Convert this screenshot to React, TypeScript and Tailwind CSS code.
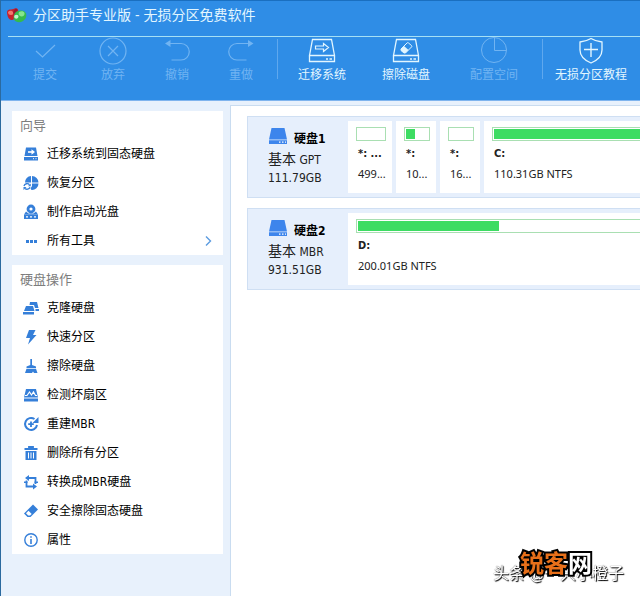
import React from "react";

type IconProps = { className?: string };

const Svg = ({
  children,
  size = 16,
}: {
  children: React.ReactNode;
  size?: number;
}) => (
  <svg
    width={size}
    height={size}
    viewBox={`0 0 ${size} ${size}`}
    fill="none"
    stroke="currentColor"
    aria-hidden="true"
    className="shrink-0"
  >
    {children}
  </svg>
);

// Toolbar icons (28 x 28)
const CheckIcon = () => (
  <Svg size={28}>
    <path d="M5 14l6.500 6L24 8" strokeWidth="1.200" />
  </Svg>
);

const DiscardIcon = () => (
  <Svg size={28}>
    <circle cx="14" cy="14" r="13" strokeWidth="1.200" />
    <path d="M9 9l10 10M19 9L9 19" strokeWidth="1.200" />
  </Svg>
);

const UndoIcon = () => (
  <Svg size={28}>
    <path d="M5 6.500h13a8 8 0 0 1 0 16.500H8.500" strokeWidth="1.200" />
    <path d="M7.500 3v7L2 6.500z" fill="currentColor" stroke="none" />
  </Svg>
);

const RedoIcon = () => (
  <Svg size={28}>
    <path d="M23 6.500H10a8 8 0 0 0 0 16.500h9.500" strokeWidth="1.200" />
    <path d="M21 3v7l5.500-3.500z" fill="currentColor" stroke="none" />
  </Svg>
);

const MigrateIcon = () => (
  <Svg size={28}>
    <path d="M4.500 2.500h19l3 16h-25zM1.500 18.500h25v6h-25z" strokeWidth="1.300" />
    <path d="M7.500 9h8V6.500l5 4-5 4V12h-8z" strokeWidth="1.200" />
    <path d="M18 22h2M21.500 22h2.500" strokeWidth="1.500" />
  </Svg>
);

const WipeIcon = () => (
  <Svg size={28}>
    <path d="M4.500 2.500h19l3 16h-25zM1.500 18.500h25v6h-25z" strokeWidth="1.300" />
    <path d="M9 12l6-6a1 1 0 0 1 1.500 0l3 2.500a1 1 0 0 1 0 1.500l-6 6H12l-3-2.500z" />
    <path d="M9 12l3-3 4.500 4-3 3H12l-3-2.500z" fill="currentColor" stroke="none" />
    <path d="M18 22h2M21.500 22h2.500" strokeWidth="1.500" />
  </Svg>
);

const SpaceIcon = () => (
  <Svg size={28}>
    <circle cx="14" cy="13" r="12.500" />
    <path d="M14.500 1v12.500H26" />
  </Svg>
);

const ShieldIcon = () => (
  <Svg size={28}>
    <path
      d="M14 1.500c4 2.500 7 3 11 3.500v8c0 6-5 10.500-11 13-6-2.500-11-7-11-13V5c4-.5 7-1 11-3.500z"
      strokeWidth="1.300"
    />
    <path d="M14 6v14M7 12.500h14" strokeWidth="1.400" />
  </Svg>
);

// Sidebar icons (16 x 16)
const MigrateSmall = () => (
  <Svg>
    <path d="M3 1.500h10l1.500 8.500h-13zM1 11h14v3.500H1z" fill="currentColor" stroke="none" />
    <path d="M5 6h4" stroke="#fff" strokeWidth="1.600" />
    <path d="M8.500 3.200L12 6 8.500 8.800z" fill="#fff" stroke="none" />
    <path d="M10 12.700h1M12.500 12.700h1" stroke="#fff" />
  </Svg>
);

const RecoverSmall = () => (
  <Svg>
    <path
      d="M8 1v6.500H2A6.500 6.500 0 0 1 8 1zM9 1a6.500 6.500 0 0 1 6.500 6.500H9zM9 8.500h6.500A6.500 6.500 0 0 1 8.500 15L7.500 13.500 9 11z"
      fill="currentColor"
      stroke="none"
    />
    <path d="M1 11a3.200 3.200 0 0 1 5.500-1.300M7 12.300A3.200 3.200 0 0 1 2 13.500" strokeWidth="1.400" />
    <path d="M7.800 8.500v2.800H5zM.5 15v-3h3z" fill="currentColor" stroke="none" />
  </Svg>
);

const BootDiscSmall = () => (
  <Svg>
    <circle cx="8" cy="5" r="3" strokeWidth="2.800" />
    <path d="M1 10.500L3 7.500l2.500 2h5l2.500-2 2 3z" fill="currentColor" stroke="none" />
    <path d="M1 10.500h14V15H1z" fill="currentColor" stroke="none" />
    <path d="M3 12.800h2M7 12.800h2M11 12.800h2" stroke="#fff" strokeWidth="1.300" />
  </Svg>
);

const DotsSmall = () => (
  <Svg>
    <path d="M3 7h3v3H3zM7 7h3v3H7zM11 7h3v3h-3z" fill="currentColor" stroke="none" />
  </Svg>
);

const CloneSmall = () => (
  <Svg>
    <path
      d="M7 2h7l1.500 6H12l-1-3H6.500zM3 6h7l1.500 5H1zM0 12h11v2.500H0zM12.500 9H16v2h-3.500z"
      fill="currentColor"
      stroke="none"
    />
  </Svg>
);

const BoltSmall = () => (
  <Svg>
    <path d="M6 1h6.500L10 6h3.500L5 15.500 7 9H3z" fill="currentColor" stroke="none" />
  </Svg>
);

const BrushSmall = () => (
  <Svg>
    <path
      d="M7.300 1H9v6l4 1.500V10H3.500V8.500L7.300 7zM3.500 10.800H13l1.500 4.200H11l-1-1.500L9 15H2z"
      fill="currentColor"
      stroke="none"
    />
  </Svg>
);

const CheckSectorSmall = () => (
  <Svg>
    <path d="M3 2h10l2 8.500H1zM1 11.500h14v3H1z" fill="currentColor" stroke="none" />
    <path d="M2 8.500h2L6.500 5l2 3 2-3L12.500 8.500H14" stroke="#fff" strokeWidth="1.200" />
  </Svg>
);

const RebuildSmall = () => (
  <Svg>
    <path d="M11.500 3A6 6 0 1 0 14 9" strokeWidth="2" />
    <path d="M15.500 1v6H9.500z" fill="currentColor" stroke="none" />
    <path d="M8 5.500V11M5.200 8.200h5.600" strokeWidth="1.800" />
  </Svg>
);

const TrashSmall = () => (
  <Svg>
    <path d="M1.500 4h13M6 3.500V2h4v1.500" strokeWidth="1.800" />
    <path d="M2.500 6h11v9h-11z" fill="currentColor" stroke="none" />
    <path d="M5.500 7.500v6M8 7.500v6M10.500 7.500v6" stroke="#fff" />
  </Svg>
);

const ConvertSmall = () => (
  <Svg>
    <path d="M3.500 6.500v6H11M5 4h7.500v6" strokeWidth="1.800" />
    <path
      d="M6 1v6L2 4zM10 9.500v6l4-3zM1 7.500h3.500v1.600H1zM11.500 7.500H15v1.600h-3.500z"
      fill="currentColor"
      stroke="none"
    />
  </Svg>
);

const EraserSmall = () => (
  <Svg>
    <path d="M10 1.500L15 6.500l-7.500 7.500H4.500L1 10.500z" fill="currentColor" stroke="none" />
    <path d="M5.500 7.800L8.700 11l-1.700 1.600H5.200L3 10.300z" fill="#fff" stroke="none" />
  </Svg>
);

const InfoSmall = () => (
  <Svg>
    <circle cx="8" cy="8" r="6.200" strokeWidth="1.400" />
    <path d="M8 7v5M8 4.200v1.600" strokeWidth="1.600" />
  </Svg>
);

const LogoIcon = ({ className }: IconProps) => (
  <svg width="20" height="16" viewBox="0 0 20 16" aria-hidden="true" className={className}>
    <path d="M0 5c0-2 2-2.500 4-2.500S8 .5 10 1.500s1 4 0 6-2 5-5 5.500S0 9 0 5z" fill="#c9202c" />
    <path d="M1 5c2-2 4-1 5 0s0 3-2 3-3-1-3-3z" fill="#f2776d" />
    <path d="M8 2c2-1 3 1 2 3L7 8 6 5z" fill="#9c1730" />
    <path d="M7 8c1-3 3-4 6-4.500s5 .5 6 3-.5 6-3 7.500-5 1.500-7 .5-3-3-2-6.500z" fill="#35bb4c" />
    <path d="M12 5c2-1.500 5-1 5.500 1S16 10 14 9.500 11 7 12 5z" fill="#86e58c" />
    <path d="M7.500 8.500c2-1.500 4-.5 4 1s-1.500 2.500-3 2-1.500-2-1-3z" fill="#c4f2d0" />
  </svg>
);

const DiskIcon = () => (
  <svg width="20" height="18" viewBox="0 0 20 18" aria-hidden="true">
    <path d="M3.500 1h13L19 12.500H1zM1 13.300h18V17H1z" fill="#3d85ec" />
    <path d="M11 15.200h1.500M14 15.200h1.500M17 15.200h1" stroke="#fff" strokeWidth="1.200" />
  </svg>
);

const wizardItems = [
  { label: "迁移系统到固态硬盘", icon: <MigrateSmall /> },
  { label: "恢复分区", icon: <RecoverSmall /> },
  { label: "制作启动光盘", icon: <BootDiscSmall /> },
  { label: "所有工具", icon: <DotsSmall />, more: true },
];

const diskItems = [
  { label: "克隆硬盘", icon: <CloneSmall /> },
  { label: "快速分区", icon: <BoltSmall /> },
  { label: "擦除硬盘", icon: <BrushSmall /> },
  { label: "检测坏扇区", icon: <CheckSectorSmall /> },
  { label: "重建MBR", icon: <RebuildSmall /> },
  { label: "删除所有分区", icon: <TrashSmall /> },
  { label: "转换成MBR硬盘", icon: <ConvertSmall /> },
  { label: "安全擦除固态硬盘", icon: <EraserSmall /> },
  { label: "属性", icon: <InfoSmall /> },
];

const disks = [
  {
    name: "硬盘1",
    style: "GPT",
    size: "111.79GB",
    partitions: [
      { name: "*: ...", size: "499...", used: 0, width: "w-11" },
      { name: "*:", size: "10...", used: 42, width: "w-10" },
      { name: "*:", size: "16...", used: 0, width: "w-10" },
      { name: "C:", size: "110.31GB NTFS", used: 100, width: "" },
    ],
  },
  {
    name: "硬盘2",
    style: "MBR",
    size: "931.51GB",
    partitions: [{ name: "D:", size: "200.01GB NTFS", used: 50, width: "" }],
  },
];

const ToolButton = ({
  label,
  icon,
  disabled,
  className,
}: {
  label: string;
  icon: React.ReactNode;
  disabled?: boolean;
  className: string;
}) => (
  <button
    disabled={disabled}
    className={`flex shrink-0 flex-col items-center gap-0.5 text-xs leading-4 whitespace-nowrap ${
      disabled ? "text-[#71b4f2]" : "text-[#e2f6ff]"
    } ${className}`}
  >
    {icon}
    {label}
  </button>
);

const Divider = ({ className }: { className: string }) => (
  <div className={`mt-0.5 h-10 w-px shrink-0 bg-[#5fa8ee] ${className}`} />
);

const Panel = ({
  title,
  items,
}: {
  title: string;
  items: { label: string; icon: React.ReactNode; more?: boolean }[];
}) => (
  <section className="bg-white">
    <h2 className="flex h-7 items-center pt-0.5 pl-2 text-[13px] text-[#7d7d7d]">
      {title}
    </h2>
    <ul>
      {items.map((item) => (
        <li key={item.label}>
          <button className="flex h-[29px] w-full items-center gap-2 px-[11px] text-xs text-black">
            <span className="text-[#357fd9]">{item.icon}</span>
            {item.label}
            {item.more && (
              <svg
                width="8"
                height="12"
                viewBox="0 0 8 12"
                fill="none"
                stroke="#5b9be0"
                strokeWidth="1.400"
                className="ml-auto"
                aria-hidden="true"
              >
                <path d="M2 1.500L6.500 6 2 10.500" />
              </svg>
            )}
          </button>
        </li>
      ))}
    </ul>
  </section>
);

const App = () => {
  return (
    <div className="flex min-h-screen flex-col overflow-hidden border-l border-[#2b6a9f] bg-white font-['DejaVu_Sans_Condensed','Noto_Sans_CJK_SC',sans-serif]">
      <header className="border-t border-b border-t-[#1a6fc0] border-b-[#7fb4ee] bg-[#2f8de6]">
        <div className="flex h-[35px] items-center gap-1.5 pb-2 pl-1.5">
          <LogoIcon />
          <h1 className="text-sm text-[#e2f6ff]">
            分区助手专业版 - 无损分区免费软件
          </h1>
        </div>
        <div className="ml-[7px] h-px bg-[#a6e0f5]" />
        <nav className="flex h-[63px] items-start pl-3">
          <ToolButton label="提交" icon={<CheckIcon />} disabled className="w-16" />
          <ToolButton label="放弃" icon={<DiscardIcon />} disabled className="ml-1 w-16" />
          <ToolButton label="撤销" icon={<UndoIcon />} disabled className="w-16" />
          <ToolButton label="重做" icon={<RedoIcon />} disabled className="w-16" />
          <Divider className="ml-1" />
          <ToolButton label="迁移系统" icon={<MigrateIcon />} className="ml-1 w-20" />
          <ToolButton label="擦除磁盘" icon={<WipeIcon />} className="ml-1 w-20" />
          <ToolButton label="配置空间" icon={<SpaceIcon />} disabled className="ml-2 w-20" />
          <Divider className="ml-2" />
          <ToolButton label="无损分区教程" icon={<ShieldIcon />} className="w-24" />
        </nav>
      </header>

      <div className="flex flex-1 bg-[#e8f1fc] pt-1">
        <aside className="flex w-[229px] shrink-0 flex-col gap-2.5 pt-1.5 pr-[7px] pl-[11px]">
          <Panel title="向导" items={wizardItems} />
          <Panel title="硬盘操作" items={diskItems} />
        </aside>

        <main className="flex min-w-0 flex-1 flex-col gap-2.5 border-t border-l border-[#c9dcf0] bg-white pt-2.5 pl-4">
          {disks.map((disk) => (
            <article
              key={disk.name}
              className="flex border border-r-0 border-[#cfdff3] bg-[#e6effc] py-1"
            >
              <div className="w-[100px] shrink-0 pt-1.5 pl-5 text-[#222]">
                <div className="flex items-end gap-1.5">
                  <DiskIcon />
                  <h3 className="text-xs leading-3 font-bold text-black">
                    {disk.name}
                  </h3>
                </div>
                <p className="mt-1 text-xs leading-5">
                  <span className="text-sm leading-5">基本</span> {disk.style}
                </p>
                <p className="text-xs leading-4">{disk.size}</p>
              </div>
              <div className="flex min-w-0 flex-1 gap-1">
                {disk.partitions.map((part, i) => (
                  <div
                    key={i}
                    className={`h-[72px] bg-white pt-1.5 pl-2 text-[11px] text-[#222] ${
                      part.width ? `${part.width} shrink-0 pr-1.5` : "min-w-0 flex-1"
                    }`}
                  >
                    <div
                      className={`h-3.5 border border-[#a9dfb2] p-px ${
                        part.width ? "" : "border-r-0 pr-0"
                      }`}
                    >
                      <div
                        className="h-full bg-[#3ddc62]"
                        style={{ width: `${part.used}%` }}
                      />
                    </div>
                    <p className="mt-[5px] pl-0.5 leading-4 font-bold whitespace-nowrap">
                      {part.name}
                    </p>
                    <p className="mt-1 pl-0.5 font-['Noto_Sans',sans-serif] leading-4 whitespace-nowrap">
                      {part.size}
                    </p>
                  </div>
                ))}
              </div>
            </article>
          ))}
        </main>
      </div>

      {/* Watermarks over the lower right corner */}
      <div className="pointer-events-none fixed right-4 bottom-2.5 text-base leading-6 whitespace-nowrap text-white [text-shadow:1px_1px_1px_#000,0_0_1px_#333]">
        头条 @一只小橙子
      </div>
      <div className="pointer-events-none fixed right-12 bottom-4 text-2xl leading-8 font-bold text-[#e8701a] [-webkit-text-stroke:4px_black] [paint-order:stroke_fill]">
        锐客<span className="text-white">网</span>
      </div>
    </div>
  );
};

export default App;
